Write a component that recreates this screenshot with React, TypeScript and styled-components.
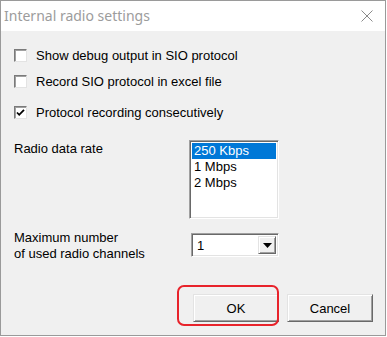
import React from 'react';
import styled, { createGlobalStyle } from 'styled-components';

const GlobalStyle = createGlobalStyle`
    html, body {
        margin: 0;
        padding: 0;
        background: #ffffff;
    }
    body {
        font-family: 'Liberation Sans', Arial, sans-serif;
        font-size: 13px;
        color: #000000;
    }
`;

const Window = styled.div`
    position: relative;
    box-sizing: border-box;
    width: 386px;
    height: 336px;
    border: 1px solid #9a9a9a;
    background: #f0f0f0;
    display: flex;
    flex-direction: column;
`;

const TitleBar = styled.div`
    height: 30px;
    background: #ffffff;
    display: flex;
    align-items: center;
    justify-content: space-between;
    padding: 0 12px 0 3px;
`;

const Title = styled.span`
    font-family: 'Noto Sans', 'Open Sans', sans-serif;
    font-size: 14px;
    color: #9c9c9c;
    margin-top: -1px;
`;

const CloseIcon = styled.svg`
    width: 12px;
    height: 12px;
`;

const Body = styled.div`
    display: flex;
    flex-direction: column;
    padding: 18px 0 0 13px;
`;

const CheckRow = styled.label<{ gap: number }>`
    display: flex;
    align-items: center;
    height: 13px;
    gap: 9px;
    margin-top: ${props => props.gap}px;
    white-space: nowrap;
`;

const Box = styled.span`
    box-sizing: border-box;
    flex: 0 0 auto;
    width: 13px;
    height: 13px;
    background: #ffffff;
    border-top: 1px solid #7a7a7a;
    border-left: 1px solid #7a7a7a;
    border-right: 1px solid #e3e3e3;
    border-bottom: 1px solid #e3e3e3;
    box-shadow: inset 1px 1px 0 #a0a0a0;
    display: flex;
    align-items: center;
    justify-content: center;
`;

const Section = styled.div<{ top: number }>`
    display: flex;
    align-items: flex-start;
    margin-top: ${props => props.top}px;
`;

const Label = styled.div<{ width: number }>`
    width: ${props => props.width}px;
    line-height: 16px;
    flex: 0 0 auto;
`;

const Sunken = styled.div`
    box-sizing: border-box;
    background: #ffffff;
    border-top: 1px solid #a0a0a0;
    border-left: 1px solid #a0a0a0;
    border-right: 1px solid #ffffff;
    border-bottom: 1px solid #ffffff;
    box-shadow: inset 1px 1px 0 #696969, inset -1px -1px 0 #e3e3e3;
`;

const ListBox = styled(Sunken)`
    width: 90px;
    height: 79px;
    padding: 2px;
`;

const ListItem = styled.div<{ selected?: boolean }>`
    height: 16px;
    line-height: 16px;
    padding-left: 2px;
    background: ${props => (props.selected ? '#0078d7' : 'transparent')};
    color: ${props => (props.selected ? '#ffffff' : '#000000')};
`;

const Combo = styled(Sunken)`
    width: 88px;
    height: 24px;
    padding: 2px;
    display: flex;
    align-items: center;
    margin-top: 3px;
`;

const ComboValue = styled.span`
    flex: 1;
    padding-left: 3px;
`;

const RaisedButton = styled.div`
    box-sizing: border-box;
    background: #f0f0f0;
    border-top: 1px solid #e3e3e3;
    border-left: 1px solid #e3e3e3;
    border-right: 1px solid #696969;
    border-bottom: 1px solid #696969;
    box-shadow: inset 1px 1px 0 #ffffff, inset -1px -1px 0 #a0a0a0;
    display: flex;
    align-items: center;
    justify-content: center;
`;

const ComboButton = styled(RaisedButton)`
    width: 18px;
    height: 18px;
`;

const ButtonRow = styled.div`
    display: flex;
    gap: 8px;
    margin: 32px 0 0 179px;
`;

const DialogButton = styled(RaisedButton)`
    width: 86px;
    height: 28px;
    font-size: 13px;
`;

const Highlight = styled.div`
    position: absolute;
    left: 176px;
    top: 284px;
    width: 102px;
    height: 41px;
    border: 2px solid #e8232b;
    border-radius: 7px;
    box-sizing: border-box;
    pointer-events: none;
`;

const Check = () => (
    <svg width="9" height="9" viewBox="0 0 9 9">
        <path d="M1 4.5 L3.2 6.8 L8 1.8" fill="none" stroke="#000" strokeWidth="1.8" />
    </svg>
);

const checks = [
    { label: 'Show debug output in SIO protocol', checked: false, gap: 0 },
    { label: 'Record SIO protocol in excel file', checked: false, gap: 13 },
    { label: 'Protocol recording consecutively', checked: true, gap: 18 },
];

const rates = ['250 Kbps', '1 Mbps', '2 Mbps'];

export default function App() {
    return (
        <>
            <GlobalStyle />
            <Window>
                <TitleBar>
                    <Title>Internal radio settings</Title>
                    <CloseIcon viewBox="0 0 12 12">
                        <path d="M0.5 0.5 L11.5 11.5 M11.5 0.5 L0.5 11.5" stroke="#8a8a8a" strokeWidth="1" />
                    </CloseIcon>
                </TitleBar>
                <Body>
                    {checks.map(c => (
                        <CheckRow key={c.label} gap={c.gap}>
                            <Box>{c.checked && <Check />}</Box>
                            {c.label}
                        </CheckRow>
                    ))}
                    <Section top={21}>
                        <Label width={175} style={{ marginTop: 1 }}>
                            Radio data rate
                        </Label>
                        <ListBox>
                            {rates.map((r, i) => (
                                <ListItem key={r} selected={i === 0}>
                                    {r}
                                </ListItem>
                            ))}
                        </ListBox>
                    </Section>
                    <Section top={11}>
                        <Label width={177}>
                            Maximum number
                            <br />
                            of used radio channels
                        </Label>
                        <Combo>
                            <ComboValue>1</ComboValue>
                            <ComboButton>
                                <svg width="9" height="5" viewBox="0 0 9 5">
                                    <path d="M0 0 H9 L4.5 5 Z" fill="#000" />
                                </svg>
                            </ComboButton>
                        </Combo>
                    </Section>
                    <ButtonRow>
                        <DialogButton>OK</DialogButton>
                        <DialogButton>Cancel</DialogButton>
                    </ButtonRow>
                </Body>
                <Highlight />
            </Window>
        </>
    );
}
